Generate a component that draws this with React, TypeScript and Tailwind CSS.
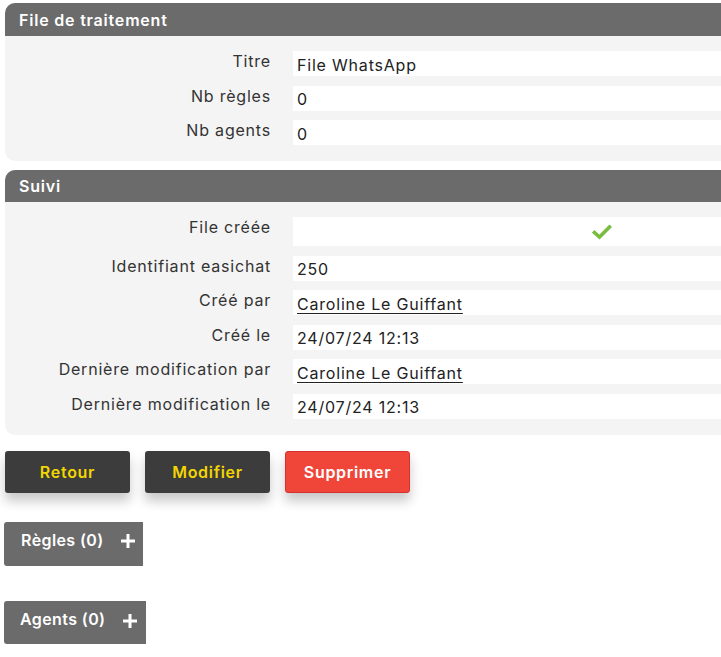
import React from "react";

type Row = { label: string; value?: React.ReactNode; tall?: boolean };

function Panel({ title, rows, headH }: { title: string; rows: Row[]; headH: string }) {
  return (
    <div className="w-[920px] rounded-l-[10px] bg-[#f4f4f4] overflow-hidden">
      <div className={`${headH} bg-[#6b6b6b] pl-[14px] flex items-center text-white font-semibold text-[16px] tracking-[0.8px]`}>
        {title}
      </div>
      <div className="pt-[15px] pb-[16px] flex flex-col gap-[9.5px]">
        {rows.map((r) => (
          <div key={r.label} className="flex items-start">
            <div className="w-[266px] text-right leading-[20px] text-[16px] tracking-[0.8px] text-[#333]">{r.label}</div>
            <div
              className={`ml-[22px] w-[614px] bg-white pl-[4px] text-[16px] tracking-[0.8px] text-[#222] flex items-center pt-[2px] ${
                r.tall ? "h-[29px]" : "h-[25px]"
              }`}
            >
              {r.value}
            </div>
          </div>
        ))}
      </div>
    </div>
  );
}

function Check() {
  return (
    <div className="w-full flex justify-center -mt-[2px]">
      <svg width="20" height="16" viewBox="0 0 20 16">
        <polyline points="2.5,8.5 7.5,13 17.5,3" fill="none" stroke="#79bd3f" strokeWidth="3.6" strokeLinecap="square" />
      </svg>
    </div>
  );
}

function Plus() {
  return (
    <svg width="16" height="16" viewBox="0 0 16 16">
      <rect x="6.5" y="1" width="3" height="14" fill="white" />
      <rect x="1" y="6.5" width="14" height="3" fill="white" />
    </svg>
  );
}

export default function App() {
  const link = (t: string) => <span className="underline underline-offset-[3px] decoration-[1px]">{t}</span>;
  const btn = "w-[125px] h-[42px] rounded-[3px] font-semibold text-[16px] tracking-[0.7px] shadow-[0_8px_12px_rgba(0,0,0,0.22)]";
  return (
    <div className="w-[721px] h-[657px] overflow-hidden bg-white font-['Inter',sans-serif] text-[#333]">
      <div className="pl-[5px] pt-[3px]">
        <Panel
          title="File de traitement"
          headH="h-[33px]"
          rows={[
            { label: "Titre", value: "File WhatsApp" },
            { label: "Nb règles", value: "0" },
            { label: "Nb agents", value: "0" },
          ]}
        />
        <div className="h-[9px]" />
        <Panel
          title="Suivi"
          headH="h-[32px]"
          rows={[
            { label: "File créée", value: <Check />, tall: true },
            { label: "Identifiant easichat", value: "250" },
            { label: "Créé par", value: link("Caroline Le Guiffant") },
            { label: "Créé le", value: "24/07/24 12:13" },
            { label: "Dernière modification par", value: link("Caroline Le Guiffant") },
            { label: "Dernière modification le", value: "24/07/24 12:13" },
          ]}
        />
        <div className="mt-[16px] flex gap-[15px]">
          <button className={`${btn} bg-[#3c3c3c] text-[#f2d600]`}>Retour</button>
          <button className={`${btn} bg-[#3c3c3c] text-[#f2d600]`}>Modifier</button>
          <button className={`${btn} bg-[#f0463a] border border-[#d8302c] text-white`}>Supprimer</button>
        </div>
        <div className="mt-[29px] -ml-[1px] w-[139px] h-[44px] bg-[#6b6b6b] rounded-l-[3px] flex items-start pt-[8px] pl-[17px] text-white font-semibold text-[16px] tracking-[0.4px]">
          <span className="leading-[20px]">Règles (0)</span>
          <span className="ml-auto mr-[7px] mt-[3px]"><Plus /></span>
        </div>
        <div className="mt-[35px] -ml-[1px] w-[142px] h-[43px] bg-[#6b6b6b] rounded-l-[3px] flex items-start pt-[8px] pl-[16px] text-white font-semibold text-[16px] tracking-[0.4px]">
          <span className="leading-[20px]">Agents (0)</span>
          <span className="ml-auto mr-[8px] mt-[4px]"><Plus /></span>
        </div>
      </div>
    </div>
  );
}
